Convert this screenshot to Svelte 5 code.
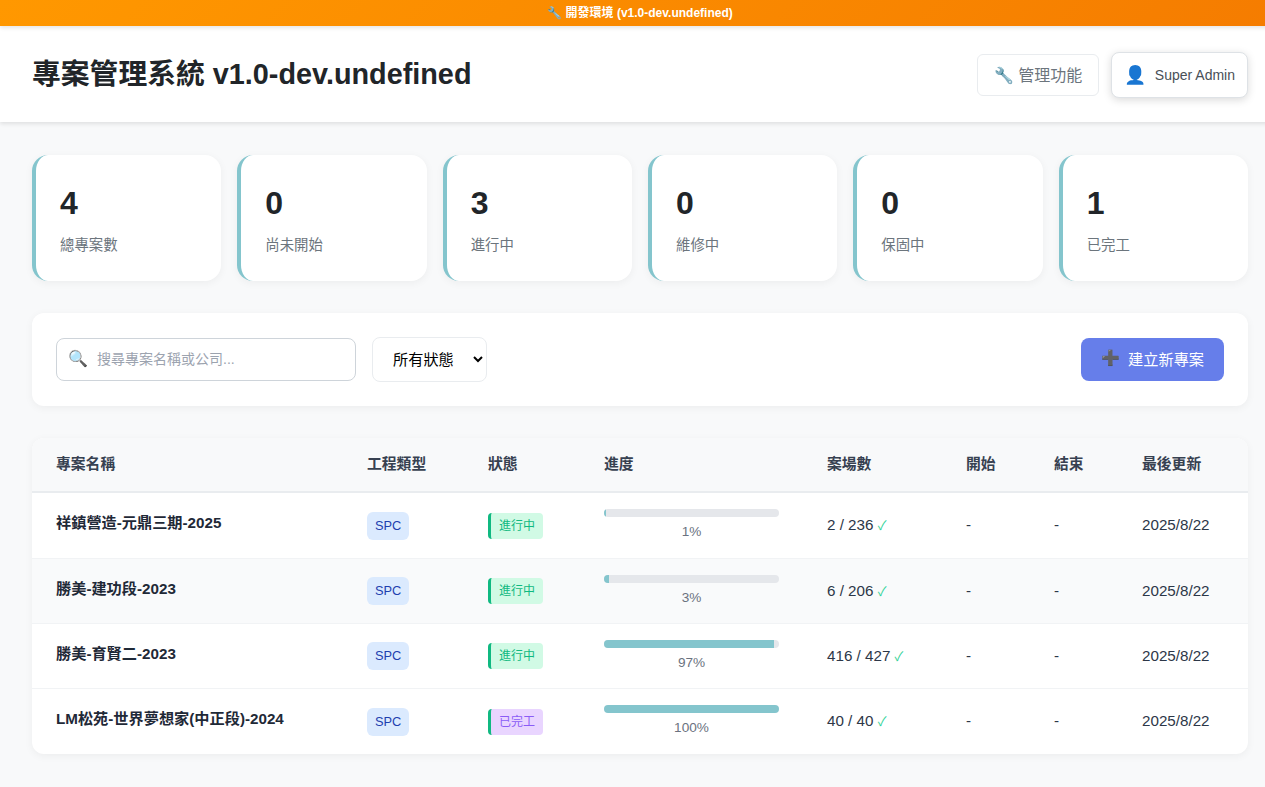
<script>
  const stats = [
    { value: 4, label: '總專案數' },
    { value: 0, label: '尚未開始' },
    { value: 3, label: '進行中' },
    { value: 0, label: '維修中' },
    { value: 0, label: '保固中' },
    { value: 1, label: '已完工' }
  ];

  const columns = ['專案名稱', '工程類型', '狀態', '進度', '案場數', '開始', '結束', '最後更新'];

  const projects = [
    { name: '祥鎮營造-元鼎三期-2025', status: '進行中', kind: 'active', progress: 1, sites: '2 / 236' },
    { name: '勝美-建功段-2023', status: '進行中', kind: 'active', progress: 3, sites: '6 / 206' },
    { name: '勝美-育賢二-2023', status: '進行中', kind: 'active', progress: 97, sites: '416 / 427' },
    { name: 'LM松苑-世界夢想家(中正段)-2024', status: '已完工', kind: 'done', progress: 100, sites: '40 / 40' }
  ];
</script>

<div class="page">
  <div class="banner">🔧 開發環境 (v1.0-dev.undefined)</div>

  <header class="header">
    <h1>專案管理系統 v1.0-dev.undefined</h1>
    <div class="header-actions">
      <button class="admin-btn">🔧 管理功能</button>
      <button class="user-btn"><span class="avatar">👤</span><span>Super Admin</span></button>
    </div>
  </header>

  <main class="main">
    <section class="stats">
      {#each stats as s}
        <div class="stat-card">
          <div class="stat-value">{s.value}</div>
          <div class="stat-label">{s.label}</div>
        </div>
      {/each}
    </section>

    <section class="toolbar">
      <div class="search">
        <span class="search-icon">🔍</span>
        <input type="text" placeholder="搜尋專案名稱或公司..." />
      </div>
      <select>
        <option>所有狀態</option>
      </select>
      <button class="create-btn"><span class="plus">➕</span><span>建立新專案</span></button>
    </section>

    <section class="table-card">
      <table>
        <colgroup>
          <col class="c1" /><col class="c2" /><col class="c3" /><col class="c4" />
          <col class="c5" /><col class="c6" /><col class="c7" /><col class="c8" />
        </colgroup>
        <thead>
          <tr>
            {#each columns as c}
              <th>{c}</th>
            {/each}
          </tr>
        </thead>
        <tbody>
          {#each projects as p}
            <tr>
              <td class="name">{p.name}</td>
              <td><span class="type">SPC</span></td>
              <td><span class="status {p.kind}">{p.status}</span></td>
              <td>
                <div class="bar"><div class="fill" style="width: {p.progress}%"></div></div>
                <div class="pct">{p.progress}%</div>
              </td>
              <td class="plain">{p.sites} <span class="check">✓</span></td>
              <td class="plain">-</td>
              <td class="plain">-</td>
              <td class="plain">2025/8/22</td>
            </tr>
          {/each}
        </tbody>
      </table>
    </section>
  </main>
</div>

<style>
  :global(body) {
    background: #f8f9fa;
    font-family: "Liberation Sans", "Noto Sans CJK SC", sans-serif;
    color: #212529;
  }

  .page {
    width: 1280px;
  }

  .banner {
    height: 26px;
    line-height: 26px;
    text-align: center;
    font-size: 12px;
    font-weight: 700;
    color: #fff;
    background: linear-gradient(135deg, #ff9800, #f57c00);
    box-shadow: 0 2px 4px rgba(0, 0, 0, 0.1);
    position: relative;
  }

  .header {
    height: 96px;
    box-sizing: border-box;
    background: #fff;
    padding: 2px 32px 0;
    display: flex;
    align-items: center;
    justify-content: space-between;
    box-shadow: 0 2px 4px rgba(0, 0, 0, 0.1);
  }

  h1 {
    margin: 0 0 8px;
    font-size: 28.8px;
    font-weight: 700;
    color: #212529;
  }

  .header-actions {
    display: flex;
    align-items: center;
    gap: 12px;
  }

  .admin-btn {
    height: 42px;
    width: 122px;
    padding: 0 0 3px;
    background: #fff;
    border: 1px solid #e9ecef;
    border-radius: 6px;
    font: inherit;
    font-size: 16px;
    color: #6c757d;
  }

  .user-btn {
    height: 46px;
    width: 137px;
    padding: 0 12px;
    display: flex;
    align-items: center;
    justify-content: space-between;
    background: #fff;
    border: 1px solid #dee2e6;
    border-radius: 8px;
    box-shadow: 0 2px 8px rgba(0, 0, 0, 0.15);
    font: inherit;
    font-size: 14px;
    color: #495057;
  }

  .avatar {
    font-size: 18px;
  }

  .main {
    padding: 33px 32px 32px;
  }

  .stats {
    display: grid;
    grid-template-columns: repeat(6, 1fr);
    gap: 16px;
    margin-bottom: 32px;
  }

  .stat-card {
    height: 126px;
    box-sizing: border-box;
    padding: 24px;
    background: #fff;
    border-left: 4px solid #84c5cd;
    border-radius: 16px;
    box-shadow: 0 2px 8px rgba(0, 0, 0, 0.05);
  }

  .stat-value {
    font-size: 32px;
    font-weight: 700;
    line-height: 48px;
    margin-bottom: 6px;
  }

  .stat-label {
    font-size: 14.4px;
    color: #6c757d;
  }

  .toolbar {
    height: 93px;
    box-sizing: border-box;
    padding: 0 24px;
    margin-bottom: 32px;
    display: flex;
    align-items: center;
    gap: 16px;
    background: #fff;
    border-radius: 12px;
    box-shadow: 0 2px 8px rgba(0, 0, 0, 0.05);
  }

  .search {
    position: relative;
    width: 300px;
  }

  .search-icon {
    position: absolute;
    left: 12px;
    top: 46%;
    transform: translateY(-50%);
    font-size: 16px;
  }

  input {
    width: 100%;
    height: 43px;
    box-sizing: border-box;
    padding: 0 12px 2px 40px;
    border: 1px solid #ced4da;
    border-radius: 8px;
    font: inherit;
    font-size: 14px;
  }

  input::placeholder {
    color: #9ca3af;
  }

  select {
    width: 115px;
    height: 45px;
    padding: 0 16px;
    background: #fff;
    border: 1px solid #e9ecef;
    border-radius: 8px;
    font: inherit;
    font-size: 15.2px;
    color: #000;
  }

  .create-btn {
    margin-left: auto;
    height: 43px;
    padding: 0 20px 3px;
    display: flex;
    align-items: center;
    gap: 8px;
    background: #667eea;
    border: none;
    border-radius: 8px;
    font: inherit;
    font-size: 15.2px;
    color: #fff;
  }

  .table-card {
    background: #fff;
    border-radius: 12px;
    overflow: hidden;
    box-shadow: 0 2px 8px rgba(0, 0, 0, 0.05);
  }

  table {
    width: 100%;
    table-layout: fixed;
    border-collapse: separate;
    border-spacing: 0;
  }

  .c1 { width: 311px; }
  .c2 { width: 121px; }
  .c3 { width: 116px; }
  .c4 { width: 223px; }
  .c5 { width: 139px; }
  .c6 { width: 88px; }
  .c7 { width: 88px; }
  .c8 { width: 130px; }

  th {
    height: 55px;
    box-sizing: border-box;
    padding: 0 24px 4px;
    text-align: left;
    font-size: 14.8px;
    font-weight: 700;
    color: #374151;
    background: #f8f9fa;
    border-bottom: 2px solid #e9ecef;
  }

  td {
    height: 65px;
    box-sizing: border-box;
    padding: 0 24px;
    font-size: 15.2px;
    border-bottom: 1px solid #f1f3f5;
  }

  tbody tr:first-child td {
    height: 66px;
  }

  tbody tr:nth-child(2) {
    background: #f9fafb;
  }

  tbody tr:last-child td {
    border-bottom: none;
  }

  .name {
    padding-bottom: 9px;
    font-weight: 700;
    color: #1f2937;
  }

  .plain {
    padding-bottom: 2px;
    color: #2d3748;
  }

  .type {
    display: inline-block;
    padding: 4px 8px;
    background: #dbeafe;
    border-radius: 6px;
    font-size: 12.8px;
    line-height: 20px;
    color: #1e40af;
  }

  .status {
    display: inline-block;
    padding: 3px 8px;
    border-left: 3px solid #10b981;
    border-radius: 4px;
    font-size: 12px;
    line-height: 20px;
  }

  .status.active {
    background: #d1fae5;
    color: #10b981;
  }

  .status.done {
    background: #e9d5ff;
    color: #8b5cf6;
  }

  .bar {
    height: 8px;
    background: #e5e7eb;
    border-radius: 4px;
    overflow: hidden;
  }

  .fill {
    height: 100%;
    background: #84c5cd;
  }

  .pct {
    margin-top: 7px;
    margin-bottom: 3px;
    text-align: center;
    font-size: 13.6px;
    color: #6b7280;
  }

  .check {
    font-size: 12.8px;
    color: #34d399;
  }
</style>
